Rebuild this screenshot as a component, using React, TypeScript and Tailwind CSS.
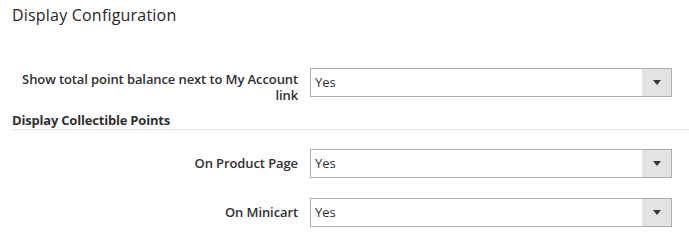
import React from "react";

function Select() {
  return (
    <div className="ml-[12px] flex h-[29px] w-[362px] shrink-0 border border-[#adadad] bg-white">
      <div className="flex flex-1 items-center pl-[4px] text-[13px] font-normal text-[#303030]">Yes</div>
      <div className="flex w-[29px] items-center justify-center bg-[#e3e3e3]">
        <svg width="8" height="5" viewBox="0 0 8 5">
          <polygon points="0,0 8,0 4,5" fill="#41362f" />
        </svg>
      </div>
    </div>
  );
}

export default function App() {
  return (
    <div className="h-[241px] w-[689px] overflow-hidden bg-white pl-3 font-['Open_Sans',sans-serif] text-[#303030]">
      <div className="pt-[4px] text-[16px] leading-[22px] tracking-[0.2px] text-[#262626]">Display Configuration</div>

      <div className="mt-[42px] flex">
        <div className="w-[286px] pt-[3px] text-right text-[13px] font-semibold leading-[16px] tracking-[-0.1px]">
          Show total point balance next to My Account link
        </div>
        <Select />
      </div>

      <div className="mt-[9px] border-b border-[#e3e3e3] pb-[1px] text-[13px] font-bold leading-[16px] tracking-[-0.2px]">
        Display Collectible Points
      </div>

      <div className="mt-[19px] flex">
        <div className="w-[286px] pt-[6px] text-right text-[13px] font-semibold leading-[16px] tracking-[-0.1px]">On Product Page</div>
        <Select />
      </div>

      <div className="mt-[20px] flex">
        <div className="w-[286px] pt-[6px] text-right text-[13px] font-semibold leading-[16px] tracking-[-0.1px]">On Minicart</div>
        <Select />
      </div>
    </div>
  );
}
